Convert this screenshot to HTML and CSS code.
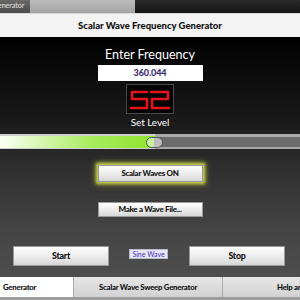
FILE: index.html
```html
<!DOCTYPE html>
<html>
<head>
<meta charset="utf-8">
<link rel="stylesheet" href="styles.css">
</head>
<body>
<div class="screen">
  <div class="taskbar">
    <div class="tb-a">enerator</div>
    <div class="tb-b"></div>
    <div class="tb-c"></div>
  </div>
  <div class="titlebar">Scalar Wave Frequency Generator</div>
  <div class="main">
    <div class="label-big">Enter Frequency</div>
    <div class="freq">360.044</div>
    <div class="display">
      <svg width="46" height="28" viewBox="0 0 46 28">
        <g fill="none" stroke="#e3141c" stroke-width="2.6" stroke-linecap="round" stroke-linejoin="round">
          <path d="M20 7 H5 V14 H20 V23 H4"/>
          <path d="M24 7 H41 V14 H25 V23 H42"/>
        </g>
      </svg>
    </div>
    <div class="label-small">Set Level</div>
    <div class="slider">
      <div class="fill"></div>
      <div class="thumb"></div>
      <div class="rest"></div>
    </div>
    <div class="btn glow">Scalar Waves ON</div>
    <div class="btn file">Make a Wave File...</div>
    <div class="row">
      <div class="btn big">Start</div>
      <div class="tag">Sine Wave</div>
      <div class="btn big">Stop</div>
    </div>
  </div>
  <div class="tabs">
    <div class="tab sel">Generator</div>
    <div class="tab mid">Scalar Wave Sweep Generator</div>
    <div class="tab last">Help and</div>
  </div>
  <div class="foot"></div>
</div>
</body>
</html>
```
FILE: styles.css
```css
html, body {
  margin: 0;
  padding: 0;
  background: #000;
}
.screen {
  width: 300px;
  height: 300px;
  overflow: hidden;
  display: flex;
  flex-direction: column;
  font-family: Lato, "Open Sans", sans-serif;
}
.taskbar {
  height: 13px;
  display: flex;
  background: #1c1c1c;
}
.tb-a {
  width: 30px;
  background: linear-gradient(#6a6a6a, #4a4a4a);
  color: #e8e8e8;
  font-size: 7px;
  line-height: 11px;
  text-indent: -2px;
  white-space: nowrap;
  overflow: hidden;
}
.tb-b {
  width: 105px;
  background: linear-gradient(#bdbdbd, #a4a4a4);
}
.tb-c {
  flex: 1;
  background: linear-gradient(#2a2a2a, #141414);
}
.titlebar {
  height: 24px;
  background: #f3f3f3;
  border-top: 1px solid #d8d8d8;
  box-sizing: border-box;
  text-align: center;
  font-weight: 900;
  font-size: 9.5px;
  line-height: 23px;
  color: #111;
}
.main {
  height: 240px;
  background: linear-gradient(#000 0%, #1a1a1a 35%, #2f2f2f 55%, #444 80%, #4e4e4e 100%);
  display: flex;
  flex-direction: column;
  align-items: center;
}
.label-big {
  margin-top: 9px;
  color: #fff;
  font-size: 12.5px;
  line-height: 17px;
}
.freq {
  margin-top: 2px;
  width: 105px;
  height: 16px;
  background: #fff;
  color: #3b2f72;
  font-weight: 900;
  font-size: 9px;
  letter-spacing: -0.1px;
  line-height: 16px;
  text-align: center;
}
.display {
  margin-top: 3px;
  width: 48px;
  height: 30px;
  box-sizing: border-box;
  border: 1px solid #4a4a4a;
  background: #050505;
  display: flex;
  align-items: center;
  justify-content: center;
}
.display svg { display: block; }
.label-small {
  margin-top: 1px;
  color: #fff;
  font-size: 10px;
  letter-spacing: -0.1px;
  line-height: 14px;
}
.slider {
  margin-top: 5px;
  width: 300px;
  height: 15px;
  position: relative;
  display: flex;
  align-items: stretch;
}
.fill {
  width: 155px;
  background: linear-gradient(90deg, #fbfff6 0%, #d8f7b4 25%, #a6ec5c 60%, #8fe42e 100%);
  border-top: 2px solid #cfcfcf;
  border-bottom: 1px solid #cfcfcf;
}
.rest {
  flex: 1;
  background: #6b6b6b;
  border-top: 3px solid #a9a9a9;
  border-bottom: 2px solid #a9a9a9;
}
.thumb {
  position: absolute;
  left: 146px;
  top: 3px;
  width: 17px;
  height: 11px;
  box-sizing: border-box;
  border: 1px solid #555;
  border-radius: 6px;
  background: linear-gradient(90deg, #c9f0a0 0%, #c9f0a0 45%, #bdbdbd 50%, #bdbdbd 100%);
}
.btn {
  width: 105px;
  box-sizing: border-box;
  background: linear-gradient(#ffffff, #e9e9e9 60%, #d6d6d6);
  border: 1px solid #9a9a9a;
  color: #111;
  font-weight: 900;
  font-size: 8px;
  letter-spacing: -0.3px;
  text-align: center;
}
.glow {
  margin-top: 16px;
  height: 17px;
  line-height: 15px;
  box-shadow: 0 0 3px 2px #c8cf55, 0 0 6px 3px rgba(170, 180, 40, 0.5);
}
.file {
  margin-top: 20px;
  height: 15px;
  line-height: 13px;
}
.row {
  margin-top: 29px;
  width: 300px;
  display: flex;
  align-items: flex-start;
  padding-left: 13px;
  box-sizing: border-box;
}
.big {
  width: 96px;
  height: 20px;
  line-height: 18px;
  font-size: 8.8px;
  letter-spacing: -0.2px;
}
.tag {
  margin: 3px 21px 0 20px;
  width: 39px;
  height: 10px;
  background: #e6e6f4;
  border: 1px solid #b8b8d0;
  box-sizing: border-box;
  color: #4030c0;
  font-size: 7px;
  line-height: 8px;
  text-align: center;
  white-space: nowrap;
}
.tabs {
  height: 20px;
  display: flex;
  background: #c8c8c8;
}
.tab {
  box-sizing: border-box;
  font-weight: 900;
  font-size: 7.8px;
  letter-spacing: -0.25px;
  line-height: 20px;
  color: #111;
  white-space: nowrap;
  overflow: hidden;
}
.sel {
  width: 73px;
  background: #fff;
  padding-left: 3px;
}
.mid {
  width: 150px;
  background: linear-gradient(#e6e6e6, #d2d2d2);
  border-left: 1px solid #aaa;
  border-right: 1px solid #aaa;
  text-align: center;
}
.last {
  flex: 1;
  background: linear-gradient(#e6e6e6, #d2d2d2);
  padding-left: 54px;
}
.foot {
  height: 3px;
  background: #9c9c9c;
}
```
